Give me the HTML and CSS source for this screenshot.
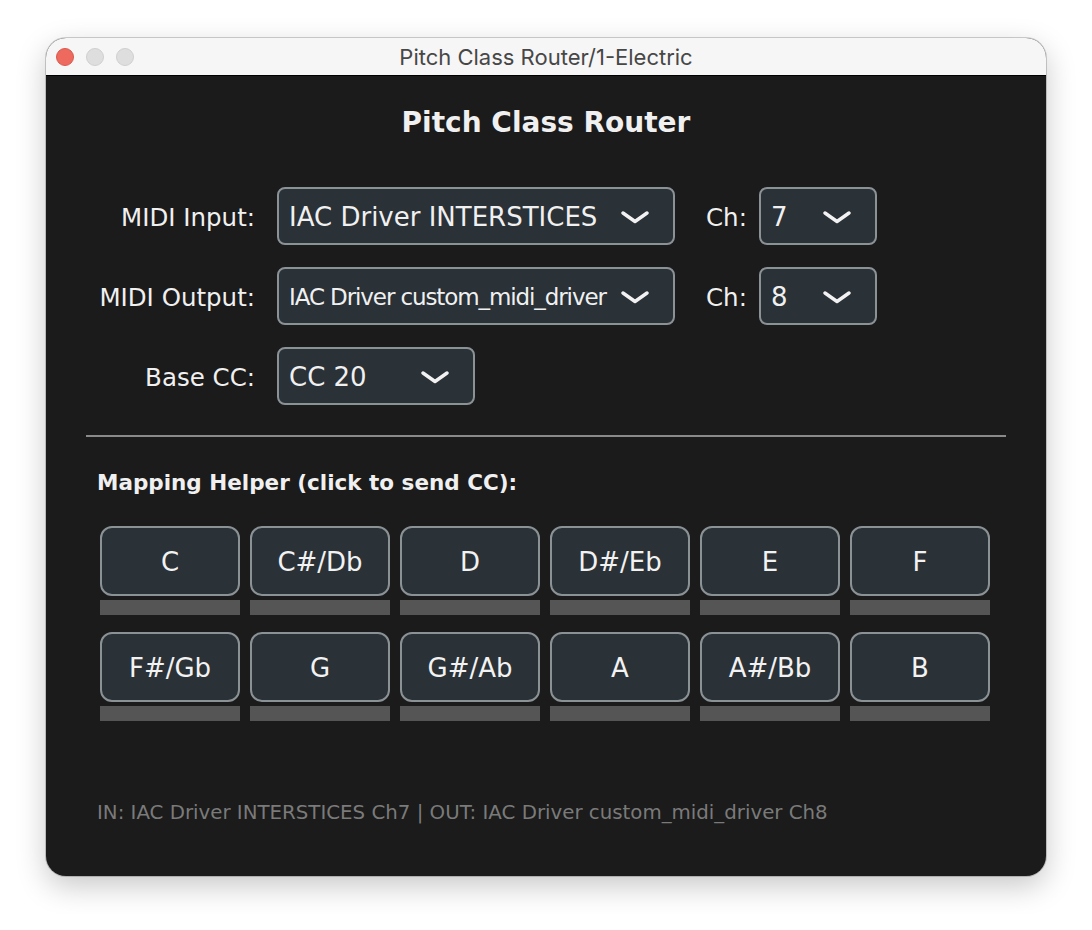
FILE: index.html
```html
<!DOCTYPE html>
<html lang="en">
<head>
  <meta charset="UTF-8">
  <title>Pitch Class Router</title>
  <link rel="stylesheet" href="styles.css">
</head>
<body>
  <div class="window">
    <div class="titlebar">
      <div class="lights">
        <span class="light red"></span>
        <span class="light"></span>
        <span class="light"></span>
      </div>
      <div class="win-title">Pitch Class Router/1-Electric</div>
    </div>

    <div class="content">
      <h1>Pitch Class Router</h1>

      <div class="form">
        <div class="row">
          <label class="label">MIDI Input:</label>
          <div class="select wide">
            <span class="value">IAC Driver INTERSTICES</span>
            <svg class="chev" width="28" height="13" viewBox="0 0 28 13"><polyline points="2,2 14,10.5 26,2" /></svg>
          </div>
          <label class="ch-label">Ch:</label>
          <div class="select small">
            <span class="value">7</span>
            <svg class="chev" width="28" height="13" viewBox="0 0 28 13"><polyline points="2,2 14,10.5 26,2" /></svg>
          </div>
        </div>

        <div class="row">
          <label class="label">MIDI Output:</label>
          <div class="select wide">
            <span class="value tight">IAC Driver custom_midi_driver</span>
            <svg class="chev" width="28" height="13" viewBox="0 0 28 13"><polyline points="2,2 14,10.5 26,2" /></svg>
          </div>
          <label class="ch-label">Ch:</label>
          <div class="select small">
            <span class="value">8</span>
            <svg class="chev" width="28" height="13" viewBox="0 0 28 13"><polyline points="2,2 14,10.5 26,2" /></svg>
          </div>
        </div>

        <div class="row">
          <label class="label">Base CC:</label>
          <div class="select medium">
            <span class="value">CC 20</span>
            <svg class="chev" width="28" height="13" viewBox="0 0 28 13"><polyline points="2,2 14,10.5 26,2" /></svg>
          </div>
        </div>
      </div>

      <hr class="sep">

      <h2>Mapping Helper (click to send CC):</h2>

      <div class="pads" id="pads"></div>

      <div class="status">IN: IAC Driver INTERSTICES Ch7 | OUT: IAC Driver custom_midi_driver Ch8</div>
    </div>
  </div>

  <script>
    const names = ["C", "C#/Db", "D", "D#/Eb", "E", "F", "F#/Gb", "G", "G#/Ab", "A", "A#/Bb", "B"];
    const pads = document.getElementById("pads");

    names.forEach(function (name) {
      const cell = document.createElement("div");
      cell.className = "pad";

      const btn = document.createElement("button");
      btn.className = "pad-btn";
      btn.textContent = name;

      const bar = document.createElement("div");
      bar.className = "pad-bar";

      cell.appendChild(btn);
      cell.appendChild(bar);
      pads.appendChild(cell);
    });
  </script>
</body>
</html>
```

FILE: styles.css
```css
body {
  margin: 0;
  padding: 38px 46px;
  background: #ffffff;
  font-family: 'DejaVu Sans', sans-serif;
}

.window {
  width: 1000px;
  height: 838px;
  border-radius: 20px;
  overflow: hidden;
  background: #1b1b1b;
  box-shadow: 0 0 0 1px rgba(0,0,0,0.18), 0 10px 30px rgba(0,0,0,0.22);
  display: flex;
  flex-direction: column;
}

.titlebar {
  height: 37px;
  flex: none;
  background: #f6f6f6;
  border-bottom: 1px solid #000;
  display: flex;
  align-items: center;
  position: relative;
}

.lights {
  display: flex;
  gap: 12px;
  padding-left: 10px;
}

.light {
  width: 16px;
  height: 16px;
  border-radius: 50%;
  background: #dedede;
  border: 1px solid #cfcfcf;
}

.light.red {
  background: #ee6a5f;
  border-color: #d9574d;
}

.win-title {
  position: absolute;
  left: 0;
  right: 0;
  text-align: center;
  font-family: 'Inter', sans-serif;
  font-size: 22px;
  color: #474747;
  pointer-events: none;
}

.content {
  padding: 0 40px;
  color: #f0f0f0;
}

h1 {
  margin: 25px 0 0;
  text-align: center;
  font-size: 28px;
  font-weight: bold;
  line-height: 44px;
}

.form {
  margin-top: 42px;
  display: flex;
  flex-direction: column;
  gap: 22px;
}

.row {
  display: flex;
  align-items: center;
  height: 58px;
}

.label {
  width: 169px;
  margin-right: 22px;
  text-align: right;
  font-size: 24.5px;
  white-space: nowrap;
  padding-top: 2px;
}

.ch-label {
  margin-left: 31px;
  margin-right: 12px;
  font-size: 24.5px;
  padding-top: 2px;
}

.select {
  box-sizing: border-box;
  height: 58px;
  flex: none;
  border: 2px solid #8a9296;
  border-radius: 8px;
  background: #2a3137;
  display: flex;
  align-items: center;
  justify-content: space-between;
  padding: 2px 24px 0 10px;
  font-size: 26px;
}

.select.wide {
  width: 398px;
}

.select.medium {
  width: 198px;
}

.select.small {
  width: 118px;
}

.value {
  white-space: nowrap;
}

.value.tight {
  font-size: 23px;
  letter-spacing: -1.1px;
}

.chev {
  flex: none;
}

.chev polyline {
  fill: none;
  stroke: #f2f2f2;
  stroke-width: 3.4;
  stroke-linecap: round;
  stroke-linejoin: round;
}

.sep {
  margin: 30px 0 0;
  border: none;
  height: 2px;
  background: #8a8a8a;
}

h2 {
  margin: 32px 0 0 11px;
  font-size: 21.5px;
  font-weight: bold;
  line-height: 28px;
}

.pads {
  margin: 29px 14px 0;
  display: grid;
  grid-template-columns: repeat(6, 140px);
  column-gap: 10px;
  row-gap: 17px;
}

.pad {
  display: flex;
  flex-direction: column;
  gap: 4px;
}

.pad-btn {
  box-sizing: border-box;
  height: 70px;
  border: 2px solid #8a9296;
  border-radius: 12px;
  background: #2a3137;
  color: #f2f2f2;
  font-family: 'DejaVu Sans', sans-serif;
  font-size: 26px;
  padding-top: 2px;
  cursor: pointer;
}

.pad-bar {
  height: 15px;
  background: #555555;
}

.status {
  margin: 80px 0 0 11px;
  font-size: 19.8px;
  color: #7a7a7a;
}
```
